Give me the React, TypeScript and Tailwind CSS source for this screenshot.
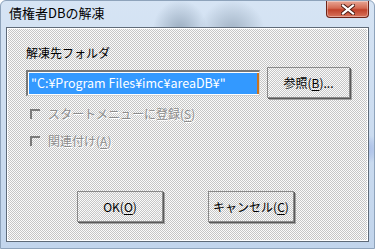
const FONT = "font-['Noto_Sans_CJK_JP','Noto_Sans',sans-serif]";
const DITHER =
  "bg-[image:repeating-conic-gradient(#c6c6c6_0_25%,#fbfbfb_0_50%)] bg-[length:2px_2px]";

function Mnemonic({ label, k, rest = "" }: { label: string; k: string; rest?: string }) {
  return (
    <span>
      {label}(<span className="underline underline-offset-2">{k}</span>){rest}
    </span>
  );
}

function PushButton({ children, className = "" }: { children: React.ReactNode; className?: string }) {
  return (
    <button
      type="button"
      className={`${DITHER} flex items-center justify-center border border-[#8a8a8a] text-[12px] text-black shadow-[1px_1px_0_#5a5a5a,2px_2px_0_#a0a0a0] ${className}`}
    >
      {children}
    </button>
  );
}

function DisabledCheck({ children }: { children: React.ReactNode }) {
  return (
    <div className="flex h-[18px] items-center pl-[4px]">
      <div className="h-[10px] w-[10px] border-l-2 border-t-2 border-[#7a7a7a]" />
      <span className="ml-[8px] text-[12px] text-[#8c8c8c] [text-shadow:1px_1px_0_#ffffff]">
        {children}
      </span>
    </div>
  );
}

export default function App() {
  return (
    <div
      className={`${FONT} relative flex h-[249px] w-[375px] flex-col overflow-hidden rounded-t-[6px] border border-[#8ea3bb] bg-[#c9daee] bg-[image:radial-gradient(ellipse_at_48%_12%,#9aacbf_0,transparent_10%),radial-gradient(ellipse_at_62%_12%,#a2b3c5_0,transparent_10%),radial-gradient(ellipse_at_93%_60%,#8ea6e0_0,transparent_8%),linear-gradient(180deg,#d6e4f4,#c2d5ec)]`}
    >
      <div className="flex h-[26px] shrink-0 items-start">
        <span className="pl-[8px] pt-[4px] text-[13px] leading-[16px] text-black">債権者DBの解凍</span>
        <div className="ml-auto mr-[5px] flex h-[17px] w-[43px] items-center justify-center rounded-b-[4px] border border-t-0 border-[#6e2418] bg-[linear-gradient(180deg,#e8a796_0%,#d46a52_45%,#c0422a_55%,#d8745c_100%)] shadow-[inset_0_0_0_1px_rgba(255,255,255,0.35)]">
          <svg width="14" height="11" viewBox="0 0 14 11">
            <path d="M2 1.5 L12 9.5 M12 1.5 L2 9.5" stroke="#4a1a12" strokeWidth="4" strokeLinecap="square" />
            <path d="M2 1.5 L12 9.5 M12 1.5 L2 9.5" stroke="#ffffff" strokeWidth="2.2" strokeLinecap="square" />
          </svg>
        </div>
      </div>

      <div
        className={`${DITHER} mx-[5px] flex h-[215px] flex-col border border-[#5e6a78] pl-[19px] pt-[17px] shadow-[inset_1px_1px_0_#ffffff,inset_-1px_-1px_0_#ffffff]`}
      >
        <div className="text-[12px] leading-[16px] text-black">解凍先フォルダ</div>

        <div className="mt-[6px] flex h-[31px] items-center">
          <div className="flex h-[26px] w-[234px] items-center border-l-2 border-t-2 border-b border-r border-[#777777] border-b-[#d0d0d0] border-r-[#d0d0d0] bg-white pl-[1px]">
            <div className="flex h-[21px] w-[228px] items-center bg-[#3399ff] pl-[2px] text-[12.5px] text-white">
              "C:¥Program Files¥imc¥areaDB¥"
            </div>
            <div className="h-[21px] w-[2px] bg-[#c9731f]" />
          </div>
          <PushButton className="ml-[7px] h-[31px] w-[83px]">
            <Mnemonic label="参照" k="B" rest="..." />
          </PushButton>
        </div>

        <div className="mt-[7px]">
          <DisabledCheck>
            <Mnemonic label="スタートメニューに登録" k="S" />
          </DisabledCheck>
        </div>
        <div className="mt-[9px]">
          <DisabledCheck>
            <Mnemonic label="関連付け" k="A" />
          </DisabledCheck>
        </div>

        <div className="mt-[41px] flex">
          <PushButton className="ml-[51px] h-[31px] w-[86px]">
            <Mnemonic label="OK" k="O" />
          </PushButton>
          <PushButton className="ml-[45px] h-[31px] w-[86px]">
            <Mnemonic label="キャンセル" k="C" />
          </PushButton>
        </div>
      </div>
    </div>
  );
}
